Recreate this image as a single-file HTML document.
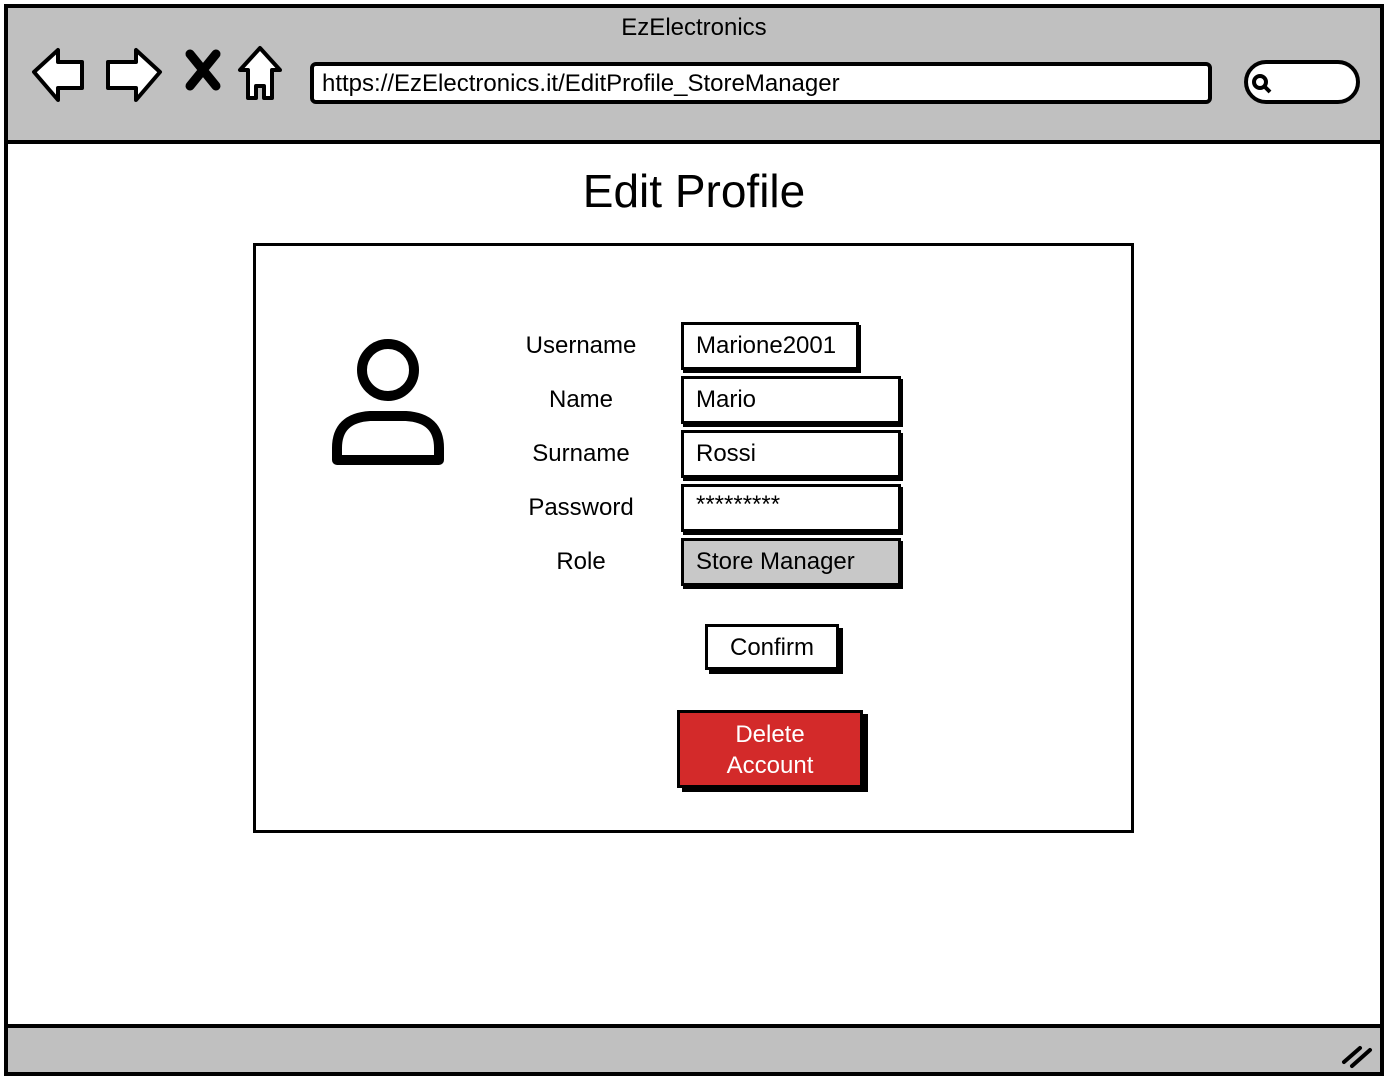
<!DOCTYPE html>
<html><head><style>
body{margin:0;width:1388px;height:1080px;position:relative;font-family:"Liberation Sans",sans-serif;background:#fff;overflow:hidden}
.a{position:absolute;box-sizing:border-box}
.lbl{position:absolute;width:200px;text-align:center;font-size:24px;left:481px}
.in{position:absolute;border:3px solid #000;box-shadow:2px 3px 0 #000;background:#fff;font-size:24px;padding-left:12px;box-sizing:border-box;line-height:42px}
</style></head><body>
<div class="a" style="left:4px;top:4px;width:1380px;height:1072px;border:4px solid #000"></div>
<div class="a" style="left:8px;top:8px;width:1372px;height:136px;background:#c0c0c0;border-bottom:4px solid #000"></div>
<div class="a" style="left:8px;top:1024px;width:1372px;height:48px;background:#c0c0c0;border-top:4px solid #000"></div>
<div class="a" style="left:0;top:14px;width:1388px;text-align:center;font-size:24px">EzElectronics</div>
<svg class="a" style="left:28px;top:44px" width="260" height="60" viewBox="0 0 260 60">
<path d="M6 28 L30 6 L30 18 L54 18 L54 44 L30 44 L30 56 Z" fill="#fff" stroke="#000" stroke-width="4" stroke-linejoin="round"/>
<path d="M132 28 L108 6 L108 18 L80 18 L80 44 L108 44 L108 56 Z" fill="#fff" stroke="#000" stroke-width="4" stroke-linejoin="round"/>
<path d="M162 10 L188 42 M188 10 L162 42" stroke="#000" stroke-width="9" stroke-linecap="round"/>
<path d="M232 4 L212 26 L220 26 L220 54 L228 54 L228 42 L236 42 L236 54 L244 54 L244 26 L252 26 Z" fill="#fff" stroke="#000" stroke-width="4" stroke-linejoin="round"/>
</svg>
<div class="a" style="left:310px;top:62px;width:902px;height:42px;border:4px solid #000;border-radius:6px;background:#fff;font-size:24px;padding-left:8px;line-height:36px">https://EzElectronics.it/EditProfile_StoreManager</div>
<div class="a" style="left:1244px;top:60px;width:116px;height:44px;border:4px solid #000;border-radius:22px;background:#fff"></div>
<svg class="a" style="left:1250px;top:72px" width="24" height="24"><circle cx="10" cy="10" r="6" fill="none" stroke="#000" stroke-width="4"/><path d="M14 14 L20 20" stroke="#000" stroke-width="4"/></svg>
<svg class="a" style="left:1340px;top:1040px" width="40" height="30"><path d="M4 22 L20 8 M12 26 L30 10" stroke="#000" stroke-width="4" stroke-linecap="round"/></svg>
<div class="a" style="left:0;top:164px;width:1388px;text-align:center;font-size:46px">Edit Profile</div>
<div class="a" style="left:253px;top:243px;width:881px;height:590px;border:3px solid #000"></div>
<svg class="a" style="left:330px;top:336px" width="116" height="132"><circle cx="58" cy="34" r="26" fill="none" stroke="#000" stroke-width="10"/><path d="M7 124 L7 112 Q7 82 40 80 L76 80 Q109 82 109 112 L109 124 Z" fill="none" stroke="#000" stroke-width="10" stroke-linejoin="round"/></svg>
<div class="lbl" style="top:332px">Username</div>
<div class="lbl" style="top:386px">Name</div>
<div class="lbl" style="top:440px">Surname</div>
<div class="lbl" style="top:494px">Password</div>
<div class="lbl" style="top:548px">Role</div>
<div class="in" style="left:681px;top:322px;width:178px;height:48px">Marione2001</div>
<div class="in" style="left:681px;top:376px;width:220px;height:48px">Mario</div>
<div class="in" style="left:681px;top:430px;width:220px;height:48px">Rossi</div>
<div class="in" style="left:681px;top:484px;width:220px;height:48px;line-height:36px">*********</div>
<div class="in" style="left:681px;top:538px;width:220px;height:48px;background:#c8c8c8">Store Manager</div>
<div class="in" style="left:705px;top:624px;width:134px;height:46px;padding:0;text-align:center;box-shadow:4px 4px 0 #000">Confirm</div>
<div class="a" style="left:677px;top:710px;width:186px;height:78px;background:#d32a2a;border:3px solid #000;box-shadow:5px 4px 0 #000;color:#fff;font-size:24px;text-align:center;line-height:31px;padding-top:6px">Delete<br>Account</div>
</body></html>
